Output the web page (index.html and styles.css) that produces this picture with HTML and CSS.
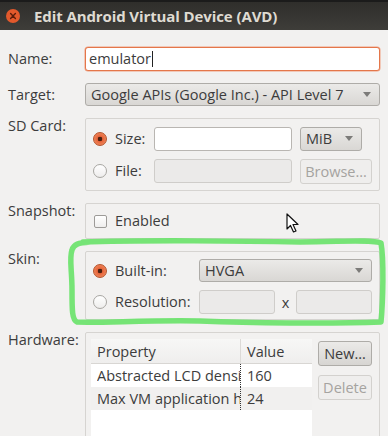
FILE: index.html
```html
<!DOCTYPE html>
<html>
<head>
<meta charset="utf-8">
<link rel="stylesheet" href="styles.css">
</head>
<body>
<div class="window">
  <div class="titlebar">
    <span class="close"><svg width="14" height="14" viewBox="0 0 14 14"><circle cx="7" cy="7" r="7" fill="#e2592c"/><path d="M4.6 4.6 L9.4 9.4 M9.4 4.6 L4.6 9.4" stroke="#5a1c0a" stroke-width="1.4" stroke-linecap="round"/></svg></span>
    <span class="title">Edit Android Virtual Device (AVD)</span>
  </div>
  <div class="form">
    <div class="lbl mid">Name:</div>
    <div class="entry focus">emulator<span class="caret"></span></div>

    <div class="lbl mid">Target:</div>
    <div class="combo wide"><span>Google APIs (Google Inc.) - API Level 7</span><span class="arrow"></span></div>

    <div class="lbl">SD Card:</div>
    <div class="frame sd">
      <span class="radio on"></span><span class="opt">Size:</span>
      <div class="entry"></div>
      <div class="combo mib"><span>MiB</span><span class="arrow"></span></div>
      <span class="radio"></span><span class="opt">File:</span>
      <div class="entry disabled"></div>
      <div class="button disabled">Browse...</div>
    </div>

    <div class="lbl">Snapshot:</div>
    <div class="frame snap">
      <span class="check"></span><span class="opt">Enabled</span>
    </div>

    <div class="lbl">Skin:</div>
    <div class="frame skin">
      <span class="radio on"></span><span class="opt">Built-in:</span>
      <div class="combo hvga"><span>HVGA</span><span class="arrow"></span></div>
      <span class="radio"></span><span class="opt">Resolution:</span>
      <div class="res">
        <div class="entry disabled"></div>
        <span class="times">x</span>
        <div class="entry disabled"></div>
      </div>
    </div>

    <div class="lbl">Hardware:</div>
    <div class="frame hw">
      <div class="table">
        <div class="thead">
          <div class="th prop">Property</div>
          <div class="th val">Value</div>
        </div>
        <div class="tr">
          <div class="td prop"><span class="clip">Abstracted LCD density</span></div>
          <div class="td val">160</div>
        </div>
        <div class="tr alt">
          <div class="td prop"><span class="clip">Max VM application heap size</span></div>
          <div class="td val">24</div>
        </div>
      </div>
      <div class="buttons">
        <div class="button">New...</div>
        <div class="button disabled">Delete</div>
      </div>
    </div>
  </div>

  <svg class="cursor" width="14" height="22" viewBox="0 0 14 22">
    <path d="M1 1 L1 16 L4.5 12.5 L7.5 19 L10 18 L7 11.5 L12 11.5 Z" fill="#fff" stroke="#111" stroke-width="1.2" stroke-linejoin="round"/>
  </svg>

  <svg class="scribble" width="388" height="436" viewBox="0 0 388 436">
    <path d="M83 242 C 140 240, 250 241, 300 242 C 340 242, 370 239, 381 243 C 384 260, 383 300, 381 322 C 330 324, 250 323, 200 321 C 150 320, 100 323, 77 322 C 72 320, 72 310, 72 290 C 72 270, 69 258, 72 250 C 74 244, 78 243, 90 242"
      fill="none" stroke="#6fe36f" stroke-width="5.5" stroke-linecap="round" stroke-linejoin="round" opacity="0.95"/>
  </svg>
</div>
</body>
</html>
```

FILE: styles.css
```css
html, body {
  margin: 0;
  padding: 0;
  background: #f2f1f0;
  overflow: hidden;
}
.window {
  position: relative;
  width: 388px;
  height: 436px;
  overflow: hidden;
  font-family: "Open Sans", "Noto Sans", "DejaVu Sans", sans-serif;
  font-size: 14.5px;
  color: #3c3c3c;
}
.titlebar {
  height: 30px;
  background: linear-gradient(#2f2e2b, #3e3d39);
  border-top: 2px solid #1b1b1b;
  box-sizing: border-box;
  display: flex;
  align-items: center;
  gap: 14px;
  padding-left: 6px;
}
.close {
  display: flex;
  width: 14px;
  height: 14px;
}
.title {
  color: #dfdbd2;
  font-weight: bold;
  font-size: 15px;
  letter-spacing: -0.1px;
}
.form {
  display: grid;
  grid-template-columns: 77px 295px;
  grid-template-rows: 24px 23px 73px 36px 69px 140px;
  row-gap: 12px;
  padding: 17px 0 0 8px;
}
.lbl {
  line-height: 18px;
  margin-top: -1px;
}
.lbl.mid {
  align-self: center;
  margin-top: 0;
}
.entry {
  height: 24px;
  box-sizing: border-box;
  background: #fff;
  border: 1px solid #b9b6b2;
  border-radius: 3px;
  padding-left: 3px;
  line-height: 22px;
  display: flex;
  align-items: center;
}
.entry.focus {
  border-color: #e4764a;
  box-shadow: 0 0 0 0.5px #f0a080;
}
.entry.disabled {
  background: #ebeae9;
  border-color: #cfcdca;
}
.caret {
  display: inline-block;
  width: 1px;
  height: 16px;
  background: #222;
  margin-left: 1px;
}
.combo {
  height: 23px;
  box-sizing: border-box;
  border: 1px solid #aeaca8;
  border-radius: 3px;
  background: linear-gradient(#ebeae8, #d9d7d4);
  display: flex;
  align-items: center;
  justify-content: space-between;
  padding: 0 8px 0 5px;
}
.arrow {
  width: 0;
  height: 0;
  border-left: 4px solid transparent;
  border-right: 4px solid transparent;
  border-top: 5px solid #7c7b79;
}
.frame {
  border: 1px solid #d6d4d1;
  border-radius: 2px;
  box-sizing: border-box;
}
.sd {
  display: grid;
  grid-template-columns: 22px 39px 138px 72px;
  grid-template-rows: 25px 24px;
  row-gap: 8px;
  column-gap: 0;
  padding: 7px 0 0 7px;
  align-items: center;
}
.sd .entry { grid-column: 3; }
.sd .combo, .sd .button { margin-left: 8px; }
.mib { width: 62px; height: 24px; }
.sd .button { width: 72px; height: 25px; }
.radio {
  width: 14px;
  height: 14px;
  box-sizing: border-box;
  border-radius: 50%;
  border: 1px solid #a8a6a2;
  background: linear-gradient(#ffffff, #eeedec);
}
.radio.on {
  border-color: #b4532c;
  background: radial-gradient(circle at 50% 50%, #4a2010 0, #4a2010 2px, #e6643a 2.6px, #f08a5e 7px);
}
.opt {
  line-height: 18px;
}
.button {
  box-sizing: border-box;
  border: 1px solid #aeaca8;
  border-radius: 3px;
  background: linear-gradient(#ebeae8, #d7d5d2);
  display: flex;
  align-items: center;
  justify-content: center;
}
.button.disabled {
  color: #a5a3a0;
  border-color: #d3d1ce;
  background: #efeeed;
}
.snap {
  display: flex;
  align-items: center;
  padding: 0 0 0 8px;
}
.check {
  width: 13px;
  height: 13px;
  box-sizing: border-box;
  border: 1px solid #9d9b98;
  border-radius: 2px;
  background: linear-gradient(#ffffff, #efeeed);
  margin-right: 8px;
}
.skin {
  display: grid;
  grid-template-columns: 22px 84px 173px;
  grid-template-rows: 23px 24px;
  row-gap: 8px;
  padding: 7px 0 0 7px;
  align-items: center;
}
.hvga { height: 23px; }
.res {
  display: flex;
  align-items: center;
}
.res .entry { width: 76px; }
.times {
  width: 21px;
  text-align: center;
}
.hw {
  display: flex;
  padding: 6px 0 0 5px;
  gap: 6px;
  height: 160px;
  align-items: flex-start;
}
.table {
  width: 221px;
  height: 120px;
  background: #fff;
}
.thead, .tr {
  display: flex;
}
.thead {
  height: 25px;
  background: linear-gradient(#f7f7f6, #efeeed);
  border-bottom: 1px solid #d8d6d3;
  box-sizing: border-box;
}
.th, .td {
  white-space: nowrap;
  overflow: hidden;
  box-sizing: border-box;
  padding-left: 6px;
  display: flex;
  align-items: center;
}
.th.prop { width: 150px; border-right: 1px solid #dcdad7; }
.th.val { flex: 1; }
.tr { height: 23px; }
.tr.alt { background: #f1f0ef; }
.td.prop { width: 150px; border-right: 1px dotted #333; }
.td.val { flex: 1; }
.clip {
  display: block;
  width: 143px;
  overflow: hidden;
  white-space: nowrap;
}
.buttons {
  display: flex;
  flex-direction: column;
  gap: 9px;
  margin-top: 2px;
}
.buttons .button {
  width: 54px;
  height: 25px;
}
.cursor {
  position: absolute;
  left: 286px;
  top: 213px;
}
.scribble {
  position: absolute;
  left: 0;
  top: 0;
  pointer-events: none;
}
```
